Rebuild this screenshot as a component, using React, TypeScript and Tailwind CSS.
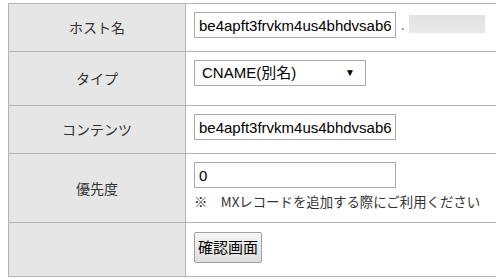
import React from 'react';

const jp = "font-['Noto_Sans_CJK_JP',sans-serif]";
const field =
  "h-[26px] w-[202px] border border-[#a9a9a9] bg-white px-[4px] text-[15px] text-black font-['Liberation_Sans','Noto_Sans_CJK_JP',sans-serif] outline-none";

function Label({ children }: { children?: React.ReactNode }) {
  return (
    <th
      className={`w-[177px] border border-[#b4b4b4] bg-[#e6e6e6] align-middle text-[14px] font-normal text-[#333] ${jp}`}
    >
      {children}
    </th>
  );
}

export default function App() {
  return (
    <div className="h-[279px] w-[496px] overflow-hidden bg-white">
      <table className="ml-[8px] mt-[3px] w-[600px] border-collapse">
        <tbody>
          <tr className="h-[48px]">
            <Label>ホスト名</Label>
            <td className="border border-[#b4b4b4] px-[8px] pt-[8px] align-top">
              <div className="flex items-end gap-[5px]">
                <input className={field} defaultValue="be4apft3frvkm4us4bhdvsab6" readOnly />
                <span className="pb-[6px] text-[13px] leading-none text-[#555]">.</span>
                <div className="mb-[5px] h-[18px] w-[76px] bg-gradient-to-b from-[#e2e2e2] to-[#eaeaea]" />
              </div>
            </td>
          </tr>
          <tr className="h-[54px]">
            <Label>タイプ</Label>
            <td className="border border-[#b4b4b4] px-[8px] pt-[8px] align-top">
              <div
                className={`flex h-[26px] w-[172px] items-center justify-between border border-[#a9a9a9] bg-white pl-[7px] pr-[10px] text-[15px] text-black font-['Liberation_Sans','Noto_Sans_CJK_JP',sans-serif]`}
              >
                <span>CNAME(別名)</span>
                <span className="text-[10px] leading-none">▼</span>
              </div>
            </td>
          </tr>
          <tr className="h-[48px]">
            <Label>コンテンツ</Label>
            <td className="border border-[#b4b4b4] px-[8px] pt-[8px] align-top">
              <input className={field} defaultValue="be4apft3frvkm4us4bhdvsab6" readOnly />
            </td>
          </tr>
          <tr className="h-[69px]">
            <Label>優先度</Label>
            <td className="border border-[#b4b4b4] px-[8px] pt-[8px] align-top">
              <input className={field} defaultValue="0" readOnly />
              <p className={`mt-[4px] text-[13.4px] leading-[18px] text-[#333] ${jp}`}>
                ※　MXレコードを追加する際にご利用ください
              </p>
            </td>
          </tr>
          <tr className="h-[54px]">
            <Label />
            <td className="border border-[#b4b4b4] px-[8px] pt-[9px] align-top">
              <button
                className={`h-[31px] rounded-[2px] border border-[#a0a0a0] bg-gradient-to-b from-[#f6f6f6] to-[#dedede] px-[3px] text-[15px] text-black ${jp}`}
              >
                確認画面
              </button>
            </td>
          </tr>
        </tbody>
      </table>
    </div>
  );
}
